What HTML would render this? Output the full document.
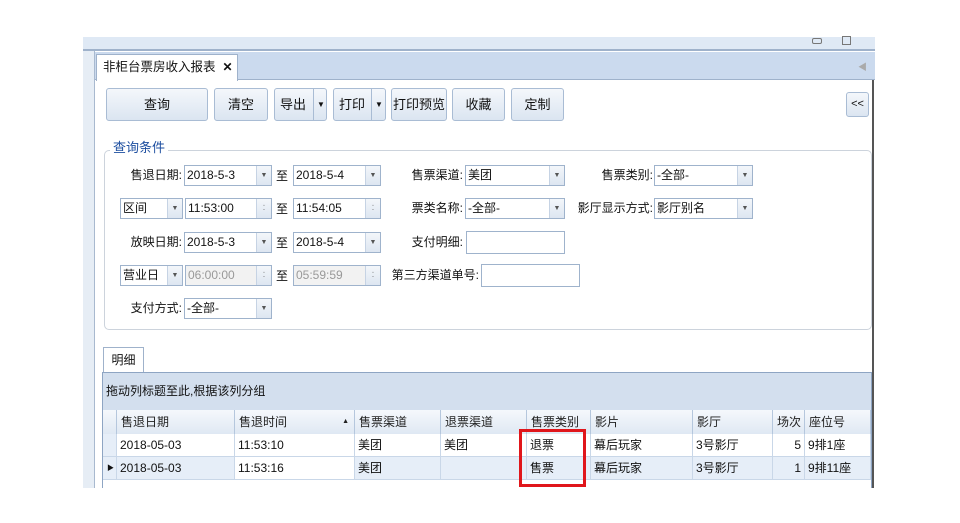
<!DOCTYPE html><html><head><meta charset="utf-8"><style>
body{margin:0;width:960px;height:523px;background:#fff;position:relative;overflow:hidden;font-family:"Liberation Sans","Noto Sans CJK SC",sans-serif;font-size:12px;color:#111}
div,span{position:absolute;box-sizing:border-box;white-space:nowrap}
.btn{top:88px;height:33px;border:1px solid #a9bcd4;border-radius:3px;background:linear-gradient(#f4f7fb,#dbe5f1);text-align:center;line-height:31px;font-size:13px}
.lbl{text-align:right;font-size:12px;line-height:20px}
.cb{height:21px;border:1px solid #9fb3cc;background:#fff;line-height:19px;padding-left:2px;font-size:12px}
.cb .a{right:0;top:0;width:15px;height:19px;border-left:1px solid #c6d3e4;background:linear-gradient(#f3f6fa,#dde6f1);font-size:7px;text-align:center;line-height:19px;color:#555}
.dis{background:#f2f2f2;color:#999}
.h{top:410px;height:24px;line-height:24px;padding-left:4px;border-right:1px solid #b5c7dd;background:linear-gradient(#f5f8fc,#dfe8f3);font-size:12px;color:#222}
.c{height:23px;line-height:23px;padding-left:3px;border-right:1px solid #c9d7e8;border-bottom:1px solid #c9d7e8}
</style></head><body>
<div style="left:83px;top:37px;width:792px;height:14px;background:#dfe9f5;border-bottom:2px solid #9fb2cb"></div>
<div style="left:812px;top:38px;width:10px;height:6px;border:1px solid #777;border-radius:2px"></div>
<div style="left:842px;top:36px;width:9px;height:9px;border:1px solid #777"></div>
<div style="left:83px;top:51px;width:12px;height:437px;background:#e6edf5;border-right:1px solid #a8b9cf"></div>
<div style="left:95px;top:52px;width:780px;height:28px;background:#cbdaee;border-bottom:1px solid #9fb2cb"></div>
<div style="left:96px;top:54px;width:142px;height:27px;background:#fff;border:1px solid #9fb2cb;border-bottom:none;line-height:24px;padding-left:6px;font-size:12.5px">非柜台票房收入报表 &nbsp;<b style="font-size:12px">✕</b></div>
<span style="left:858px;top:60px;color:#aaa;font-size:9px">◀</span>
<div style="left:872px;top:80px;width:2px;height:408px;background:#555"></div>
<div class="btn" style="left:106px;width:102px">查询</div>
<div class="btn" style="left:214px;width:54px">清空</div>
<div class="btn" style="left:274px;width:53px;text-align:left;padding-left:5px">导出<span style="left:38px;top:0;width:1px;height:31px;background:#a9bcd4"></span><span style="left:42px;top:0;font-size:8px">▼</span></div>
<div class="btn" style="left:333px;width:53px;text-align:left;padding-left:5px">打印<span style="left:37px;top:0;width:1px;height:31px;background:#a9bcd4"></span><span style="left:41px;top:0;font-size:8px">▼</span></div>
<div class="btn" style="left:391px;width:56px">打印预览</div>
<div class="btn" style="left:452px;width:53px">收藏</div>
<div class="btn" style="left:511px;width:53px">定制</div>
<div class="btn" style="left:846px;top:92px;width:23px;height:25px;line-height:23px;font-size:11px">&lt;&lt;</div>
<div style="left:104px;top:150px;width:768px;height:180px;border:1px solid #ccd3dc;border-radius:5px"></div>
<span style="left:110px;top:137px;background:#fff;padding:0 3px;color:#1e4fa0;font-size:13px">查询条件</span>

<div class="lbl" style="left:110px;top:165px;width:72px">售退日期:</div>
<div class="cb" style="left:184px;top:165px;width:88px">2018-5-3<span class="a">▼</span></div>
<span style="left:276px;top:167px">至</span>
<div class="cb" style="left:293px;top:165px;width:88px">2018-5-4<span class="a">▼</span></div>
<div class="lbl" style="left:390px;top:165px;width:73px">售票渠道:</div>
<div class="cb" style="left:465px;top:165px;width:100px">美团<span class="a">▼</span></div>
<div class="lbl" style="left:580px;top:165px;width:73px">售票类别:</div>
<div class="cb" style="left:654px;top:165px;width:99px">-全部-<span class="a">▼</span></div>

<div class="cb" style="left:120px;top:198px;width:63px">区间<span class="a">▼</span></div>
<div class="cb" style="left:185px;top:198px;width:87px">11:53:00<span class="a">⁚</span></div>
<span style="left:276px;top:200px">至</span>
<div class="cb" style="left:293px;top:198px;width:88px">11:54:05<span class="a">⁚</span></div>
<div class="lbl" style="left:390px;top:198px;width:73px">票类名称:</div>
<div class="cb" style="left:465px;top:198px;width:100px">-全部-<span class="a">▼</span></div>
<div class="lbl" style="left:560px;top:198px;width:93px">影厅显示方式:</div>
<div class="cb" style="left:654px;top:198px;width:99px">影厅别名<span class="a">▼</span></div>

<div class="lbl" style="left:110px;top:232px;width:72px">放映日期:</div>
<div class="cb" style="left:184px;top:232px;width:88px">2018-5-3<span class="a">▼</span></div>
<span style="left:276px;top:234px">至</span>
<div class="cb" style="left:293px;top:232px;width:88px">2018-5-4<span class="a">▼</span></div>
<div class="lbl" style="left:390px;top:232px;width:73px">支付明细:</div>
<div class="cb" style="left:466px;top:231px;width:99px;height:23px"></div>

<div class="cb" style="left:120px;top:265px;width:63px">营业日<span class="a">▼</span></div>
<div class="cb dis" style="left:185px;top:265px;width:87px">06:00:00<span class="a">⁚</span></div>
<span style="left:276px;top:267px">至</span>
<div class="cb dis" style="left:293px;top:265px;width:88px">05:59:59<span class="a">⁚</span></div>
<div class="lbl" style="left:386px;top:265px;width:93px">第三方渠道单号:</div>
<div class="cb" style="left:481px;top:264px;width:99px;height:23px"></div>

<div class="lbl" style="left:110px;top:298px;width:72px">支付方式:</div>
<div class="cb" style="left:184px;top:298px;width:88px">-全部-<span class="a">▼</span></div>

<div style="left:103px;top:347px;width:41px;height:26px;border:1px solid #9fb2cb;border-bottom:none;background:#fff;line-height:24px;text-align:center">明细</div>
<div style="left:102px;top:372px;width:770px;height:116px;border:1px solid #8ea5c3;border-bottom:none;background:#fff"></div>
<div style="left:103px;top:373px;width:768px;height:37px;background:#d3dfee;line-height:37px;padding-left:3px">拖动列标题至此,根据该列分组</div>
<div class="h" style="left:103px;width:14px"></div>
<div class="h" style="left:117px;width:118px">售退日期</div>
<div class="h" style="left:235px;width:120px">售退时间<span style="right:5px;top:0;font-size:7px">▲</span></div>
<div class="h" style="left:355px;width:86px">售票渠道</div>
<div class="h" style="left:441px;width:86px">退票渠道</div>
<div class="h" style="left:527px;width:64px">售票类别</div>
<div class="h" style="left:591px;width:102px">影片</div>
<div class="h" style="left:693px;width:80px">影厅</div>
<div class="h" style="left:773px;width:32px">场次</div>
<div class="h" style="left:805px;width:66px">座位号</div>

<div style="left:103px;top:434px;width:768px;height:23px;background:#fff"></div>
<div style="left:103px;top:457px;width:768px;height:24px;background:#e6eef8"></div>
<div class="c" style="left:103px;top:434px;width:14px;background:#e6eef8"></div>
<div class="c" style="left:117px;top:434px;width:118px">2018-05-03</div>
<div class="c" style="left:235px;top:434px;width:120px">11:53:10</div>
<div class="c" style="left:355px;top:434px;width:86px">美团</div>
<div class="c" style="left:441px;top:434px;width:86px">美团</div>
<div class="c" style="left:527px;top:434px;width:64px">退票</div>
<div class="c" style="left:591px;top:434px;width:102px">幕后玩家</div>
<div class="c" style="left:693px;top:434px;width:80px">3号影厅</div>
<div class="c" style="left:773px;top:434px;width:32px;text-align:right;padding-right:3px">5</div>
<div class="c" style="left:805px;top:434px;width:66px">9排1座</div>

<div class="c" style="left:103px;top:457px;width:14px;font-size:7px;padding-left:4px">▶</div>
<div class="c" style="left:117px;top:457px;width:118px">2018-05-03</div>
<div class="c" style="left:235px;top:457px;width:120px;background:#fff">11:53:16</div>
<div class="c" style="left:355px;top:457px;width:86px">美团</div>
<div class="c" style="left:441px;top:457px;width:86px"></div>
<div class="c" style="left:527px;top:457px;width:64px">售票</div>
<div class="c" style="left:591px;top:457px;width:102px">幕后玩家</div>
<div class="c" style="left:693px;top:457px;width:80px">3号影厅</div>
<div class="c" style="left:773px;top:457px;width:32px;text-align:right;padding-right:3px">1</div>
<div class="c" style="left:805px;top:457px;width:66px">9排11座</div>
<div style="left:103px;top:480px;width:768px;height:8px;background:#fff"></div>
<div style="left:519px;top:429px;width:67px;height:58px;border:3px solid #e0161b"></div>
</body></html>
